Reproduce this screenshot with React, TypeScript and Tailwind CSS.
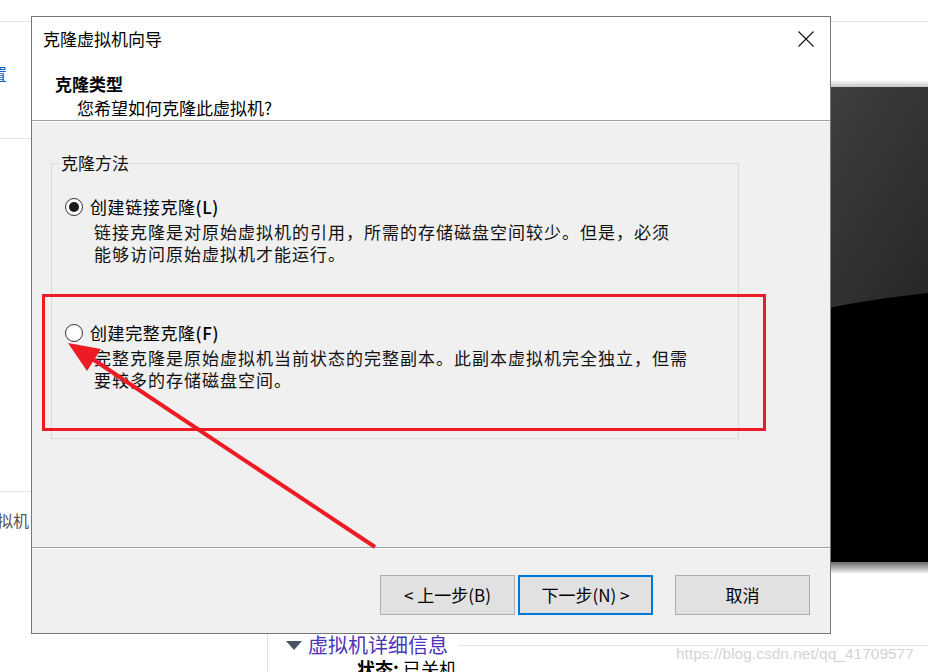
import React from "react";

const CJK = { fontFamily: "'Noto Sans CJK SC', 'Noto Sans', sans-serif" };

function Radio({ checked }: { checked: boolean }) {
  return (
    <span className="w-[18px] h-[18px] rounded-full border border-[#333333] bg-white flex items-center justify-center shrink-0">
      {checked && <span className="w-[10px] h-[10px] rounded-full bg-[#1a1a1a]" />}
    </span>
  );
}

function Option({
  checked,
  label,
  mnemonic,
  lines,
  className,
}: {
  checked: boolean;
  label: string;
  mnemonic: string;
  lines: string[];
  className?: string;
}) {
  return (
    <div className={className}>
      <div className="flex items-center h-[24px] pl-[13px] gap-[7px]">
        <Radio checked={checked} />
        <span className="text-[17px] leading-[24px] text-black tracking-[0.6px]">
          {label}
          <span className="font-medium">{mnemonic}</span>
        </span>
      </div>
      <div className="pl-[42px] mt-[2px] text-[17px] leading-[22px] tracking-[1px] text-[#111]">
        {lines.map((l) => (
          <div key={l}>{l}</div>
        ))}
      </div>
    </div>
  );
}

function Btn({ children, focused }: { children: React.ReactNode; focused?: boolean }) {
  return (
    <button
      className={
        "h-[40px] w-[135px] bg-[#e1e1e1] text-[17px] text-black flex items-center justify-center " +
        (focused ? "border-2 border-[#0078d7]" : "border border-[#adadad]")
      }
    >
      {children}
    </button>
  );
}

export default function App() {
  return (
    <div className="relative w-[928px] h-[672px] overflow-hidden bg-white" style={CJK}>
      {/* background page */}
      <div className="absolute left-0 top-[21px] w-[928px] h-px bg-[#e3e3e3]" />
      <div className="absolute left-0 top-[138px] w-[40px] h-px bg-[#e3e3e3]" />
      <div className="absolute left-[-10px] top-[62px] text-[17px] leading-[24px] text-[#0f66c6]">置</div>
      <div className="absolute left-0 top-[491px] w-[40px] h-px bg-[#e3e3e3]" />
      <div className="absolute left-[-3px] top-[508px] text-[16px] leading-[24px] text-[#555]">拟机</div>

      {/* right dark thumbnail */}
      <div className="absolute left-[780px] top-[80px] w-[148px] flex flex-col">
        <div className="h-[7px] bg-gradient-to-b from-white to-[#c4c4c4]" />
        <div className="h-[475px] bg-black">
          <svg width="148" height="475" viewBox="0 0 148 475" className="block">
            <defs>
              <linearGradient id="gl" x1="0" y1="0" x2="1" y2="1">
                <stop offset="0" stopColor="#444444" />
                <stop offset="1" stopColor="#262626" />
              </linearGradient>
            </defs>
            <path d="M0 232 Q 70 214 148 206 L148 0 L0 0 Z" fill="url(#gl)" />
          </svg>
        </div>
        <div className="h-[12px] bg-gradient-to-b from-[#6a6a6a] to-white" />
      </div>

      {/* bottom page section */}
      <div className="absolute left-[267px] top-[634px] w-[661px] h-[38px] border-l border-[#e3e3e3] pl-[18px] flex flex-col">
        <div className="flex items-center h-[22px] gap-[6px]">
          <span className="w-0 h-0 border-l-[8px] border-r-[8px] border-t-[9px] border-l-transparent border-r-transparent border-t-[#4b5560]" />
          <span className="text-[20px] leading-[22px] text-[#4a35b8]">虚拟机详细信息</span>
          <span className="flex-1 h-px bg-[#e3e3e3] ml-[4px]" />
        </div>
        <div className="pl-[71px] text-[18px] leading-[24px] text-black">
          <span className="font-bold">状态:</span> 已关机
        </div>
      </div>
      <div
        className="absolute left-[676px] top-[643px] text-[15.5px] leading-[22px] text-[#d4d4d4]"
        style={{ fontFamily: "'Liberation Sans', Arial, sans-serif" }}
      >
        https://blog.csdn.net/qq_41709577
      </div>

      {/* dialog window */}
      <div className="absolute left-[31px] top-[16px] w-[800px] h-[618px] border border-[#767676] bg-[#f0f0f0] flex flex-col">
        <div className="bg-white h-[103px] pl-[11px] pr-[16px] pt-[10px] flex flex-col">
          <div className="flex items-start justify-between">
            <div className="text-[17px] leading-[24px] text-black">克隆虚拟机向导</div>
            <svg width="16" height="16" viewBox="0 0 16 16" className="mt-[4px]">
              <path d="M0.5 0.5 L15.5 15.5 M15.5 0.5 L0.5 15.5" stroke="#111" strokeWidth="1.1" />
            </svg>
          </div>
          <div className="mt-[21px] pl-[12px] text-[17px] leading-[24px] font-bold text-black">克隆类型</div>
          <div className="pl-[34px] text-[17px] leading-[24px] text-black">您希望如何克隆此虚拟机?</div>
        </div>
        <div className="h-px bg-[#a0a0a0]" />
        <div className="h-px bg-white" />
        <div className="h-[425px] pl-[19px] pt-[29px]">
          <fieldset className="w-[688px] h-[288px] border border-[#d9d9d9]">
            <legend className="ml-[8px] px-[1px] text-[17px] leading-[24px] text-[#111]">克隆方法</legend>
            <Option
              className="pt-[20px]"
              checked
              label="创建链接克隆"
              mnemonic="(L)"
              lines={[
                "链接克隆是对原始虚拟机的引用，所需的存储磁盘空间较少。但是，必须",
                "能够访问原始虚拟机才能运行。",
              ]}
            />
            <Option
              className="mt-[56px]"
              checked={false}
              label="创建完整克隆"
              mnemonic="(F)"
              lines={[
                "完整克隆是原始虚拟机当前状态的完整副本。此副本虚拟机完全独立，但需",
                "要较多的存储磁盘空间。",
              ]}
            />
          </fieldset>
        </div>
        <div className="h-px bg-[#a0a0a0]" />
        <div className="h-px bg-white" />
        <div className="flex-1 flex items-start justify-end pt-[26px] pr-[20px]">
          <div className="flex gap-[3px]">
            <Btn>&lt; 上一步(B)</Btn>
            <Btn focused>下一步(N) &gt;</Btn>
          </div>
          <div className="ml-[22px]">
            <Btn>取消</Btn>
          </div>
        </div>
      </div>

      {/* annotations */}
      <div className="absolute left-[42px] top-[294px] w-[724px] h-[137px] border-[3px] border-[#ed1c24]" />
      <svg className="absolute left-0 top-0" width="928" height="672" viewBox="0 0 928 672">
        <line x1="375" y1="547" x2="88" y2="356" stroke="#ed1c24" strokeWidth="4" />
        <polygon points="68,343 101,349 87,371" fill="#ed1c24" />
      </svg>
    </div>
  );
}
